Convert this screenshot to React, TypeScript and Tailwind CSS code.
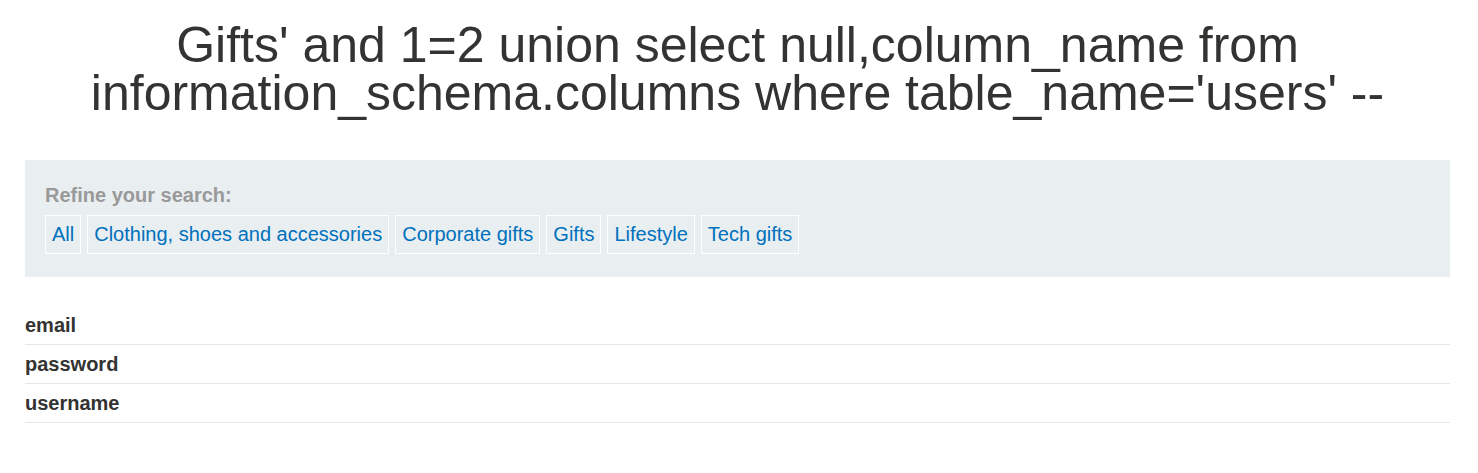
const categories = ["All", "Clothing, shoes and accessories", "Corporate gifts", "Gifts", "Lifestyle", "Tech gifts"];
const columns = ["email", "password", "username"];

export default function App() {
  return (
    <div className="min-h-screen bg-white font-['Liberation_Sans',Arial,sans-serif] text-[#333332]">
      <div className="pl-[25px] pr-[28px]">
        <h1 className="pt-[21px] pb-[43px] text-center text-[50px] leading-[48px] font-normal">
          Gifts' and 1=2 union select null,column_name from information_schema.columns where table_name='users' --
        </h1>
        <section className="bg-[#e9eef1] px-5 pt-[24px] pb-[23px]">
          <p className="text-[20px] leading-[22px] font-bold text-[#999999]">Refine your search:</p>
          <div className="mt-[9px] flex flex-wrap gap-[6px]">
            {categories.map((c) => (
              <a
                key={c}
                href="#"
                className="border border-white px-[6px] py-[8px] text-[20px] leading-[21px] text-[#0071bc]"
              >
                {c}
              </a>
            ))}
          </div>
        </section>
        <table className="mt-[29px] w-full border-collapse">
          <tbody>
            {columns.map((c) => (
              <tr key={c} className="border-b border-[#e6e6e6]">
                <th className="py-[8px] text-left text-[20px] leading-[22px] font-bold">{c}</th>
              </tr>
            ))}
          </tbody>
        </table>
      </div>
    </div>
  );
}
